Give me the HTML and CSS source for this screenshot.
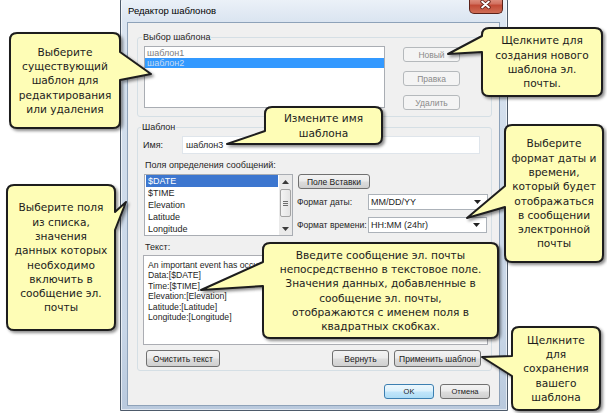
FILE: index.html
```html
<!DOCTYPE html>
<html lang="ru">
<head>
<meta charset="utf-8">
<title>Редактор шаблонов</title>
<link rel="stylesheet" href="styles.css">
</head>
<body>
<div class="stage">
  <div class="window">
    <div class="titlebar">
      <span class="title">Редактор шаблонов</span>
      <span class="close">
        <svg width="34" height="18" viewBox="0 0 34 18"><path d="M13.5 6.5 L20.5 12.5 M20.5 6.5 L13.5 12.5" stroke="#5a1d14" stroke-width="3.6" stroke-linecap="round"/><path d="M13.5 6.5 L20.5 12.5 M20.5 6.5 L13.5 12.5" stroke="#fff" stroke-width="2" stroke-linecap="round"/></svg>
      </span>
    </div>
    <div class="client">
      <fieldset class="group g1">
        <legend>Выбор шаблона</legend>
        <div class="g1-body">
          <div class="listbox tpl">
            <div class="item dim">шаблон1</div>
            <div class="item sel-light">шаблон2</div>
          </div>
          <div class="btn-col">
            <span class="btn disabled">Новый</span>
            <span class="btn disabled">Правка</span>
            <span class="btn disabled">Удалить</span>
          </div>
        </div>
      </fieldset>

      <fieldset class="group g2">
        <legend>Шаблон</legend>
        <div class="name-row">
          <span class="name-label">Имя:</span>
          <span class="input">шаблон3</span>
        </div>
        <div class="caption">Поля определения сообщений:</div>
        <div class="fields-row">
          <div class="listbox fields">
            <div class="items">
              <div class="item sel">$DATE</div>
              <div class="item">$TIME</div>
              <div class="item">Elevation</div>
              <div class="item">Latitude</div>
              <div class="item">Longitude</div>
            </div>
            <div class="scrollbar">
              <span class="sb-arrow"><svg width="7" height="4" viewBox="0 0 7 4"><path d="M0 4 L3.5 0 L7 4 Z" fill="#3a3a3a"/></svg></span>
              <span class="sb-thumb"><svg width="5" height="5" viewBox="0 0 5 5"><path d="M0 0.5 H5 M0 2.5 H5 M0 4.5 H5" stroke="#6e6e6e" stroke-width="1"/></svg></span>
              <span class="sb-track"></span>
              <span class="sb-arrow"><svg width="7" height="4" viewBox="0 0 7 4"><path d="M0 0 L3.5 4 L7 0 Z" fill="#3a3a3a"/></svg></span>
            </div>
          </div>
          <div class="side">
            <span class="btn insert">Поле Вставки</span>
            <div class="fmt fmt-date">
              <span class="fmt-label">Формат даты:</span>
              <span class="combo">MM/DD/YY<svg class="dd" width="7" height="4" viewBox="0 0 7 4"><path d="M0 0 L3.5 4 L7 0 Z" fill="#222"/></svg></span>
            </div>
            <div class="fmt fmt-time">
              <span class="fmt-label">Формат времени:</span>
              <span class="combo">HH:MM (24hr)<svg class="dd" width="7" height="4" viewBox="0 0 7 4"><path d="M0 0 L3.5 4 L7 0 Z" fill="#222"/></svg></span>
            </div>
          </div>
        </div>
        <div class="caption cap-text">Текст:</div>
        <div class="textarea">An important event has occurred<br>Data:[$DATE]<br>Time:[$TIME]<br>Elevation:[Elevation]<br>Latitude:[Latitude]<br>Longitude:[Longitude]</div>
        <div class="btn-row">
          <span class="btn clear">Очистить текст</span>
          <span class="spacer"></span>
          <span class="btn revert">Вернуть</span>
          <span class="btn apply">Применить шаблон</span>
        </div>
      </fieldset>

      <div class="dlg-buttons">
        <span class="btn default">OK</span>
        <span class="btn">Отмена</span>
      </div>
    </div>
  </div>

  <svg class="shapes" width="607" height="413" viewBox="0 0 607 413">
    <path d="M17 33 H113 Q120 33 120 40 V52 L151 74 L120 80 V121 Q120 128 113 128 H17 Q10 128 10 121 V40 Q10 33 17 33 Z"/>
    <path d="M489 28 H595 Q602 28 602 35 V89 Q602 96 595 96 H489 Q482 96 482 89 V52 L448 54 L482 36 V35 Q482 28 489 28 Z"/>
    <path d="M272 107 H375 Q382 107 382 114 V137 Q382 144 375 144 H283 L227 144 L265 131 V114 Q265 107 272 107 Z"/>
    <path d="M512 125 H596 Q603 125 603 132 V255 Q603 262 596 262 H512 Q505 262 505 255 V207 L467 218 L505 186 V132 Q505 125 512 125 Z"/>
    <path d="M14 185 H108 Q115 185 115 192 V212 L126 202 L115 230 V323 Q115 330 108 330 H14 Q7 330 7 323 V192 Q7 185 14 185 Z"/>
    <path d="M270 243 H491 Q498 243 498 250 V331 Q498 338 491 338 H270 Q263 338 263 331 V286 L201 290 L263 262 V250 Q263 243 270 243 Z"/>
    <path d="M519 327 H593 Q600 327 600 334 V403 Q600 410 593 410 H519 Q512 410 512 403 V376 L482 357 L512 356 V334 Q512 327 519 327 Z"/>
  </svg>

  <div class="callout c1">Выберите<br>существующий<br>шаблон для<br>редактирования<br>или удаления</div>
  <div class="callout c2">Щелкните для<br>создания нового<br>шаблона эл.<br>почты.</div>
  <div class="callout c3">Измените имя<br>шаблона</div>
  <div class="callout c4">Выберите<br>формат даты и<br>времени,<br>который будет<br>отображаться<br>в сообщении<br>электронной<br>почты</div>
  <div class="callout c5">Выберите поля<br>из списка,<br>значения<br>данных которых<br>необходимо<br>включить в<br>сообщение эл.<br>почты</div>
  <div class="callout c6">Введите сообщение эл. почты<br>непосредственно в текстовое поле.<br>Значения данных, добавленные в<br>сообщение эл. почты,<br>отображаются с именем поля в<br>квадратных скобках.</div>
  <div class="callout c7">Щелкните<br>для<br>сохранения<br>вашего<br>шаблона</div>
</div>
</body>
</html>
```

FILE: styles.css
```css
* { box-sizing: border-box; }
html, body { margin: 0; padding: 0; }
body {
  background: #ffffff;
  font-family: "Liberation Sans", Arial, sans-serif;
  font-size: 9px;
  color: #1e1e1e;
}
.stage {
  position: relative;
  width: 607px;
  height: 413px;
  overflow: hidden;
}

/* ---------- window frame ---------- */
.window {
  margin: -5px 0 0 120px;
  width: 388px;
  height: 416px;
  border: 1px solid #4d5a6a;
  border-radius: 6px 6px 0 0;
  background: linear-gradient(#eef3f9, #dbe5f1 6%, #d2deec 30%, #c8d6e7 80%, #b9c9dd);
  box-shadow: inset 0 0 0 1px rgba(255,255,255,0.6);
  padding: 0 7px 4px 6px;
  display: flex;
  flex-direction: column;
}
.titlebar {
  height: 26px;
  display: flex;
  align-items: flex-start;
  justify-content: space-between;
}
.title {
  font-size: 9.5px;
  line-height: 11px;
  padding: 9px 0 0 1px;
  color: #000;
}
.close {
  width: 34px;
  height: 18px;
  margin-right: -3px;
  border: 1px solid #5b2219;
  border-top: none;
  border-radius: 0 0 5px 5px;
  background: linear-gradient(#e9a797, #d27261 45%, #c24a36 55%, #cf6d55);
  display: flex;
}
.close svg { display: block; margin: -1px 0 0 -1px; }

.client {
  height: 384px;
  border: 1px solid #8ea2b9;
  background: #f0f0f0;
  display: flex;
  flex-direction: column;
}

/* ---------- group boxes ---------- */
.group {
  border: 1px solid #d5dfe5;
  border-radius: 3px;
  margin: 0 7px 0 9px;
  min-width: 0;
}
.group legend {
  font-size: 9px;
  line-height: 11px;
  padding: 0 1px;
  margin-left: -2px;
  color: #1e1e1e;
}
.g1 { margin-top: 9px; padding: 3px 6px 6px 6px; }
.g2 { margin-top: 5px; padding: 3px 3px 3px 5px; }

.g1-body { display: flex; }

/* ---------- list boxes ---------- */
.listbox {
  background: #fff;
  border: 1px solid #a9adb3;
}
.tpl {
  width: 241px;
  height: 62px;
  padding-top: 1px;
}
.tpl .item {
  line-height: 10px;
  height: 10px;
  padding-left: 2px;
}
.item.dim { color: #7d7d7d; }
.item.sel-light { background: #3399ff; color: #c9dcf3; }

.btn-col {
  margin-left: 18px;
  padding-top: 1px;
  display: flex;
  flex-direction: column;
  gap: 9px;
}
.btn-col .btn { width: 57px; height: 15px; }

/* ---------- buttons ---------- */
.btn {
  display: flex;
  align-items: center;
  justify-content: center;
  border: 1px solid #707070;
  border-radius: 3px;
  background: linear-gradient(#f3f3f3, #ebebeb 48%, #dddddd 52%, #d0d0d0);
  color: #1a1a1a;
  white-space: nowrap;
  font-size: 8.5px;
}
.btn.disabled {
  border-color: #b5b9bc;
  background: #f4f4f4;
  color: #8a8a8a;
}
.btn.default {
  border-color: #3c7fb1;
  background: linear-gradient(#ecf7fd, #dcf1fc 48%, #c2e6fb 52%, #aedcf5);
}

/* ---------- group 2 ---------- */
.name-row {
  display: flex;
  align-items: center;
  height: 18px;
}
.name-label { width: 39px; }
.input {
  width: 298px;
  height: 18px;
  background: #fff;
  border: 1px solid #dfe5eb;
  display: flex;
  align-items: center;
  padding-left: 3px;
}
.caption {
  line-height: 11px;
  margin-top: 6px;
  padding-left: 2px;
}
.fields-row {
  display: flex;
  margin-top: 3px;
  height: 62px;
}
.fields {
  margin-left: 1px;
  width: 149px;
  height: 62px;
  display: flex;
}
.items { flex: 1; }
.fields .item {
  height: 12px;
  line-height: 12px;
  margin: 0 1px;
  padding-left: 2px;
}
.item.sel { background: #3c76cf; color: #fff; }

.scrollbar {
  width: 13px;
  background: #eaeaea;
  display: flex;
  flex-direction: column;
  align-items: center;
}
.sb-arrow {
  height: 13px;
  width: 13px;
  display: flex;
  align-items: center;
  justify-content: center;
}
.sb-thumb {
  width: 11px;
  height: 28px;
  margin-top: 1px;
  border: 1px solid #a3a3a3;
  border-radius: 2px;
  background: linear-gradient(90deg, #f4f4f4, #e4e4e4);
  display: flex;
  align-items: center;
  justify-content: center;
}
.sb-track { flex: 1; }

.side {
  margin-left: 4px;
  display: flex;
  flex-direction: column;
}
.btn.insert {
  margin-left: 1px;
  width: 72px;
  height: 15px;
}
.fmt {
  display: flex;
  align-items: center;
}
.fmt-date { margin-top: 5px; }
.fmt-time { margin-top: 7px; }
.fmt-label {
  width: 71px;
  flex-shrink: 0;
  white-space: nowrap;
  font-size: 8.6px;
}
.combo {
  width: 120px;
  height: 16px;
  flex-shrink: 0;
  background: #fff;
  border: 1px solid #acb2b9;
  display: flex;
  align-items: center;
  padding: 0 6px 0 2px;
  justify-content: space-between;
  white-space: nowrap;
}
.fmt-time .combo { width: 119px; }

.cap-text { margin-top: 6px; }
.textarea {
  margin-top: 2px;
  width: 345px;
  height: 90px;
  background: #fff;
  border: 1px solid #abadb3;
  padding: 4px 4px;
  line-height: 10.4px;
  font-size: 8.7px;
  white-space: nowrap;
  overflow: hidden;
}
.btn-row {
  display: flex;
  margin-top: 5px;
  height: 17px;
  padding: 0 7px 0 3px;
}
.btn-row .btn { height: 17px; }
.btn.clear { width: 74px; }
.spacer { flex: 1; }
.btn.revert { width: 57px; }
.btn.apply { width: 87px; margin-left: 5px; }

.dlg-buttons {
  display: flex;
  justify-content: flex-end;
  gap: 6px;
  margin: 13px 9px 0 0;
}
.dlg-buttons .btn { width: 50px; height: 15px; font-size: 7.5px; }

/* ---------- callouts ---------- */
.shapes {
  position: absolute;
  left: 0;
  top: 0;
  pointer-events: none;
}
.shapes path {
  fill: #fefdb6;
  stroke: #1d1d1d;
  stroke-width: 2;
  stroke-linejoin: round;
  filter: drop-shadow(2px 2px 1.5px rgba(0,0,0,0.45));
}
.callout {
  position: absolute;
  display: flex;
  align-items: center;
  justify-content: center;
  text-align: center;
  white-space: nowrap;
  font-family: "DejaVu Sans", Verdana, sans-serif;
  font-size: 10.6px;
  line-height: 14.3px;
  color: #1c1c1c;
}
.c1 { left: 10px; top: 33px; width: 110px; height: 95px; }
.c2 { left: 482px; top: 28px; width: 120px; height: 68px; }
.c3 { left: 265px; top: 107px; width: 117px; height: 37px; }
.c4 { left: 505px; top: 125px; width: 98px; height: 137px; }
.c5 { left: 7px; top: 185px; width: 108px; height: 145px; }
.c6 { left: 263px; top: 243px; width: 235px; height: 95px; }
.c7 { left: 512px; top: 327px; width: 88px; height: 83px; }
```
